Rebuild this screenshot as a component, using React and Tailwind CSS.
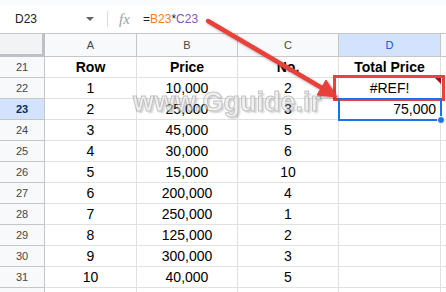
import React from 'react';

const rows = [
  { n: 21, a: 'Row', b: 'Price', c: 'No.', d: 'Total Price', bold: true },
  { n: 22, a: '1', b: '10,000', c: '2', d: '#REF!' },
  { n: 23, a: '2', b: '25,000', c: '3', d: '75,000', active: true },
  { n: 24, a: '3', b: '45,000', c: '5' },
  { n: 25, a: '4', b: '30,000', c: '6' },
  { n: 26, a: '5', b: '15,000', c: '10' },
  { n: 27, a: '6', b: '200,000', c: '4' },
  { n: 28, a: '7', b: '250,000', c: '1' },
  { n: 29, a: '8', b: '125,000', c: '2' },
  { n: 30, a: '9', b: '300,000', c: '3' },
  { n: 31, a: '10', b: '40,000', c: '5' },
];

const cols = [
  { key: 'A', w: 'w-[92px]' },
  { key: 'B', w: 'w-[101px]' },
  { key: 'C', w: 'w-[101px]' },
  { key: 'D', w: 'w-[102px]' },
];

function FormulaBar() {
  return (
    <div className="h-[33px] bg-[#f9fbfd] pt-[5px]">
      <div className="h-[28px] bg-white flex items-center text-[12px] text-[#202124]">
        <div className="w-[107px] flex items-center pl-[15px] pr-[13px]">
          <span className="flex-1">D23</span>
          <span className="w-0 h-0 border-l-[4px] border-r-[4px] border-t-[4px] border-l-transparent border-r-transparent border-t-[#5f6368]" />
        </div>
        <div className="w-px h-[16px] bg-[#dadce0]" />
        <span className="ml-[11px] w-[24px] text-[15px] italic text-[#9aa0a6] font-['Liberation_Serif',serif] leading-none">fx</span>
        <span>
          =<span className="text-[#f57c18]">B23</span>*<span className="text-[#7e57c2]">C23</span>
        </span>
      </div>
    </div>
  );
}

function HeaderRow() {
  return (
    <div className="flex h-[24px] text-[11px] text-[#444746]">
      <div className="w-[45px] bg-[#f1f3f4] border-t border-[#c4c7c5] border-r-[3px] border-b-[3px] border-r-[#bdc1c6] border-b-[#bdc1c6]" />
      {cols.map((c) => (
        <div
          key={c.key}
          className={`${c.w} flex items-center justify-center border-t border-b border-r border-[#c4c7c5] ${c.key === 'D' ? 'bg-[#d3e3fd] text-[#0b57d0]' : 'bg-[#f8f9fa]'}`}
        >
          {c.key}
        </div>
      ))}
      <div className="flex-1 bg-[#f8f9fa] border-t border-b border-[#c4c7c5]" />
    </div>
  );
}

function DataRow({ r }) {
  const text = r.bold ? 'font-bold' : '';
  return (
    <div className="flex h-[21px] text-[14px] text-black">
      <div
        className={`w-[45px] flex items-center justify-center text-[11px] border-r border-b border-[#c4c7c5] ${r.active ? 'bg-[#d3e3fd] text-[#0b2a5c] font-bold' : 'bg-[#f8f9fa] text-[#444746]'}`}
      >
        {r.n}
      </div>
      <div className={`w-[92px] flex items-center justify-center border-r border-b border-[#e1e1e1] ${text}`}>{r.a}</div>
      <div className={`w-[101px] flex items-center justify-center border-r border-b border-[#e1e1e1] ${text}`}>{r.b}</div>
      <div className={`w-[101px] flex items-center justify-center border-r border-b border-[#e1e1e1] ${text}`}>{r.c}</div>
      <div
        className={`w-[102px] flex items-center border-r border-b border-[#e1e1e1] ${text} ${r.active ? 'justify-end pr-[4px]' : 'justify-center'}`}
      >
        {r.d}
      </div>
      <div className="flex-1 border-b border-[#e1e1e1]" />
    </div>
  );
}

export default function App() {
  return (
    <div className="relative w-[446px] h-[292px] overflow-hidden bg-white font-['Liberation_Sans',Arial,sans-serif]">
      <FormulaBar />
      <HeaderRow />
      {rows.map((r) => (
        <DataRow key={r.n} r={r} />
      ))}
      <div className="flex h-[4px]">
        <div className="w-[45px] bg-[#f8f9fa] border-r border-[#c4c7c5]" />
        <div className="w-[92px] border-r border-[#e1e1e1]" />
        <div className="w-[101px] border-r border-[#e1e1e1]" />
        <div className="w-[101px] border-r border-[#e1e1e1]" />
        <div className="w-[102px] border-r border-[#e1e1e1]" />
      </div>

      {/* watermark */}
      <div className="absolute left-[133px] top-[89px] text-[27px] font-bold leading-none text-[#e8e8e8] opacity-60 [-webkit-text-stroke:1px_#9a9a9a] [text-shadow:2px_2px_2px_rgba(0,0,0,0.3)]">
        www.Gguide.ir
      </div>

      {/* error marker on D22 */}
      <div className="absolute left-[435px] top-[78px] w-0 h-0 border-l-[6px] border-l-transparent border-t-[6px] border-t-[#a50e0e]" />

      {/* red highlight box */}
      <div className="absolute left-[333px] top-[75px] w-[112px] h-[26px] border-[3px] border-[#ec4141]" />

      {/* active cell selection */}
      <div className="absolute left-[338px] top-[98px] w-[104px] h-[23px] border-2 border-[#1a73e8]" />
      <div className="absolute left-[437px] top-[116px] w-[8px] h-[8px] rounded-full bg-[#1a73e8] border border-white" />

      {/* arrow */}
      <svg className="absolute inset-0 pointer-events-none" width="446" height="292" viewBox="0 0 446 292">
        <defs>
          <filter id="sh" x="-10%" y="-10%" width="130%" height="130%">
            <feDropShadow dx="1.5" dy="1.5" stdDeviation="1.2" floodColor="#000" floodOpacity="0.35" />
          </filter>
        </defs>
        <g filter="url(#sh)" fill="#e8403a" stroke="#e8403a">
          <line x1="208" y1="21" x2="322" y2="88" strokeWidth="4.5" strokeLinecap="round" />
          <polygon points="337,97 317,95 326,80" strokeWidth="1" strokeLinejoin="round" />
        </g>
      </svg>
    </div>
  );
}
